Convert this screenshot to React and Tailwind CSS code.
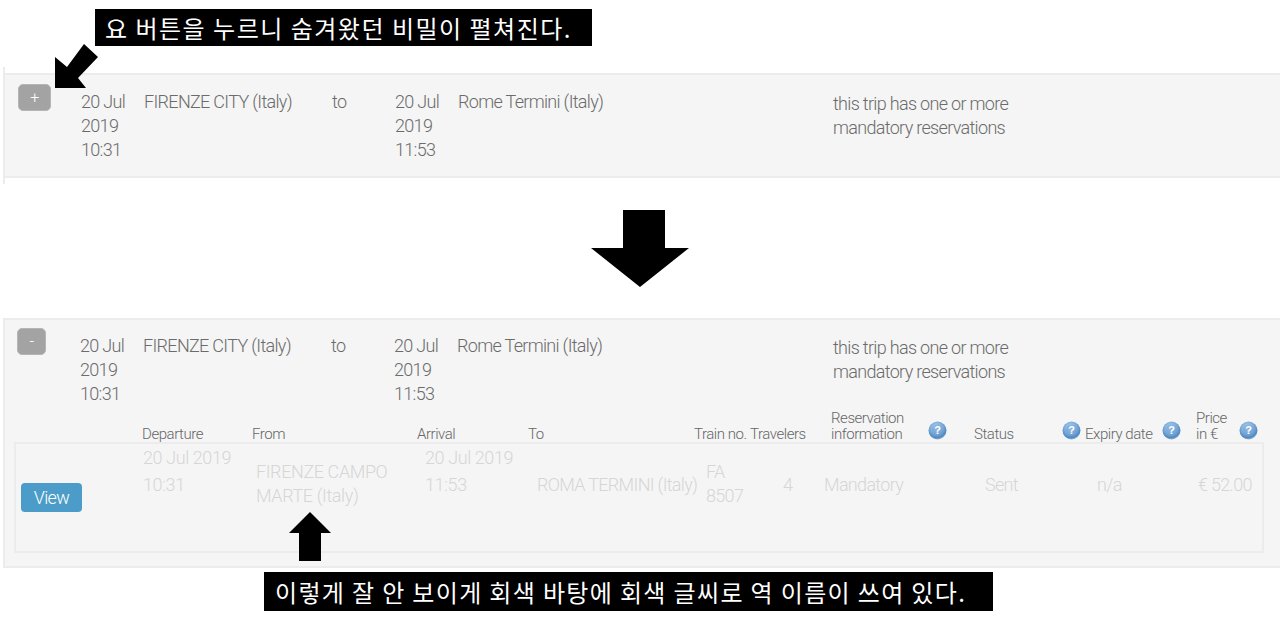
const font = { fontFamily: '"Roboto","Liberation Sans",sans-serif' };

function Help() {
  return (
    <svg width="19" height="19" viewBox="0 0 19 19" className="mb-[2px] block">
      <defs>
        <radialGradient id="hb" cx="45%" cy="35%" r="65%">
          <stop offset="0%" stopColor="#c3dcf2" />
          <stop offset="55%" stopColor="#79abdb" />
          <stop offset="85%" stopColor="#4f88bf" />
          <stop offset="100%" stopColor="#8fb4d6" />
        </radialGradient>
      </defs>
      <circle cx="9.5" cy="9.5" r="9" fill="url(#hb)" />
      <circle cx="9.5" cy="9" r="5.5" fill="#6f9fd0" opacity="0.55" />
      <text x="9.5" y="13" textAnchor="middle" fontSize="11" fontWeight="700" fill="#fff" fontFamily="Liberation Sans">?</text>
    </svg>
  );
}

function Callout({ className, children }) {
  return (
    <div className={`flex items-center bg-black text-[24px] text-white ${className}`} style={{ fontFamily: '"Noto Sans CJK KR",sans-serif' }}>
      {children}
    </div>
  );
}

function Summary({ sign, btn, face, route }) {
  return (
    <div className="flex text-[18px] leading-[24px] font-light tracking-[-0.68px] text-[#6b6b6b]">
      <div className={`${btn} flex items-start`}>
        <div className={`${face} flex h-[27px] items-center justify-center rounded-[5px] border border-[#b5b5b5] bg-[#a3a3a3] text-[16px] text-white`}>{sign}</div>
      </div>
      <div className="w-[63px] pt-[6px]">20 Jul<br />2019<br />10:31</div>
      <div className="w-[188px] pt-[6px]">FIRENZE CITY (Italy)</div>
      <div className="w-[63px] pt-[6px]">to</div>
      <div className="w-[63px] pt-[6px]">20 Jul<br />2019<br />11:53</div>
      <div className={`${route} pt-[6px]`}>Rome Termini (Italy)</div>
      <div className="w-[210px] pt-[8px]">this trip has one or more mandatory reservations</div>
    </div>
  );
}

export default function App() {
  return (
    <div className="relative h-[617px] w-[1280px] overflow-hidden bg-white" style={font}>
      <div className="pt-[9px] pl-[95px]">
        <Callout className="h-[37px] w-[497px] pl-[10px] tracking-[1.5px]">요 버튼을 누르니 숨겨왔던 비밀이 펼쳐진다.</Callout>
      </div>

      <div className="mt-[21px] ml-[3px] border-l-2 border-[#ececec] py-[6px]">
        <div className="h-[105px] border-y-2 border-[#ececec] bg-[#f5f5f5] pt-[9px] pl-[13px]">
          <Summary sign="+" btn="w-[63px]" face="w-[33px]" route="w-[375px]" />
        </div>
      </div>

      <div className="mt-[26px] flex h-[77px] justify-center">
        <svg width="98" height="77" viewBox="0 0 98 77">
          <polygon points="32,0 74,0 74,38 98,38 49,77 0,38 32,38" fill="#000" />
        </svg>
      </div>

      <div className="mt-[31px] ml-[3px] h-[250px] border-y-2 border-l-2 border-[#ececec] bg-[#f5f5f5] pt-[8px] pl-[12px]">
        <Summary sign="-" btn="w-[63px]" face="w-[29px]" route="w-[376px]" />

        <div className="mt-[2px] flex h-[34px] items-end pl-[125px] text-[15px] leading-[16px] font-light tracking-[-0.45px] text-[#666]">
          <div className="w-[110px]">Departure</div>
          <div className="w-[165px]">From</div>
          <div className="w-[111px]">Arrival</div>
          <div className="w-[166px]">To</div>
          <div className="w-[56px]">Train no.</div>
          <div className="w-[81px]">Travelers</div>
          <div className="w-[97px]">Reservation<br />information</div>
          <div className="w-[46px]"><Help /></div>
          <div className="w-[88px]">Status</div>
          <div className="w-[23px]"><Help /></div>
          <div className="w-[77px]">Expiry date</div>
          <div className="w-[34px]"><Help /></div>
          <div className="w-[43px]">Price<br />in €</div>
          <div><Help /></div>
        </div>

        <div className="-ml-[3px] flex h-[111px] w-[1250px] border-2 border-[#ececec] pt-[1px] pl-[5px] text-[18px] leading-[24px] font-light tracking-[-0.68px] text-[#d6d6d6]">
          <div className="w-[122px] pt-[38px]">
            <div className="flex h-[29px] w-[61px] items-center justify-center rounded-[4px] bg-[#4b9cc9] text-white">View</div>
          </div>
          <div className="-mt-[1px] w-[113px] leading-[27px] tracking-[-0.4px]">20 Jul 2019<br />10:31</div>
          <div className="w-[169px] pt-[15px] tracking-[-0.4px]">FIRENZE CAMPO<br />MARTE (Italy)</div>
          <div className="-mt-[1px] w-[112px] leading-[27px] tracking-[-0.4px]">20 Jul 2019<br />11:53</div>
          <div className="w-[169px] pt-[28px]">ROMA TERMINI (Italy)</div>
          <div className="w-[77px] pt-[15px]">FA<br />8507</div>
          <div className="w-[41px] pt-[28px]">4</div>
          <div className="w-[161px] pt-[28px]">Mandatory</div>
          <div className="w-[112px] pt-[28px]">Sent</div>
          <div className="w-[101px] pt-[28px]">n/a</div>
          <div className="pt-[28px]">€ 52.00</div>
        </div>
      </div>

      <div className="mt-[4px] pl-[264px]">
        <Callout className="h-[39px] w-[729px] pl-[11px] tracking-[1.35px]">이렇게 잘 안 보이게 회색 바탕에 회색 글씨로 역 이름이 쓰여 있다.</Callout>
      </div>

      <svg className="absolute top-[40px] left-[50px]" width="52" height="52" viewBox="50 40 52 52">
        <polygon points="55,88 55,57 67,67 84,44 98,57 78,78 86,88" fill="#000" />
      </svg>
      <svg className="absolute top-[512px] left-[289px]" width="42" height="49" viewBox="0 0 42 49">
        <polygon points="21,0 42,21 32,21 32,49 10,49 10,21 0,21" fill="#000" />
      </svg>
    </div>
  );
}
